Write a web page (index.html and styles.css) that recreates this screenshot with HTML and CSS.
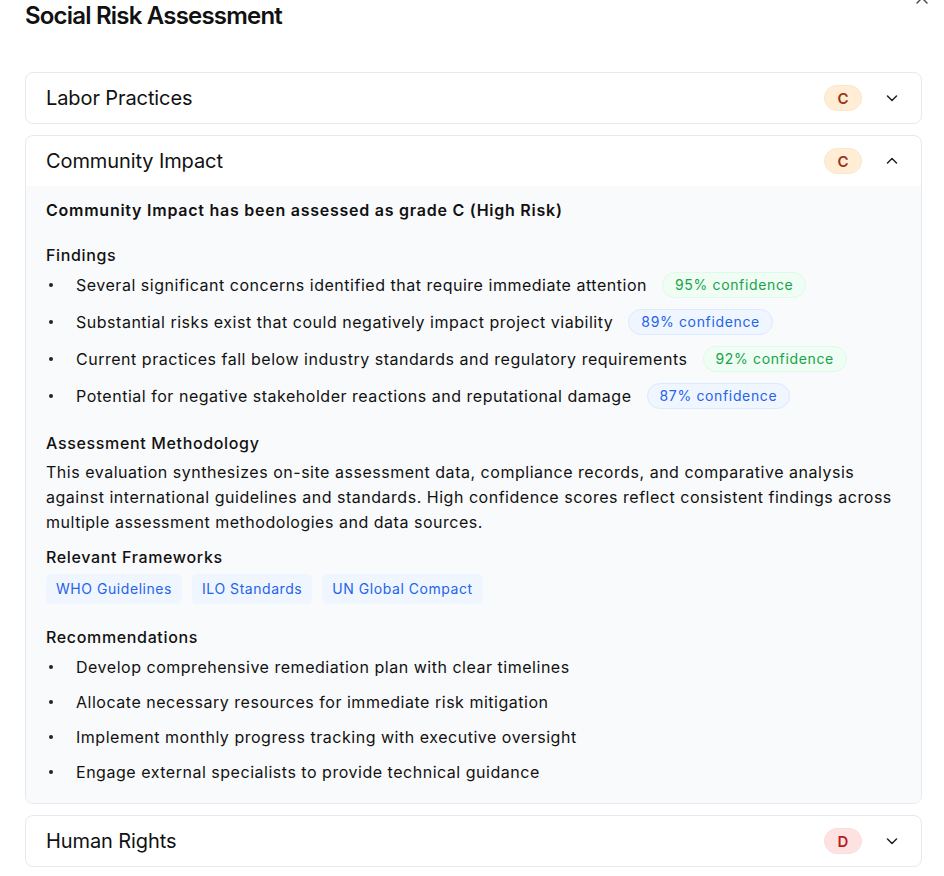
FILE: index.html
```html
<!DOCTYPE html>
<html lang="en">
<head>
<meta charset="utf-8">
<title>Social Risk Assessment</title>
<link rel="stylesheet" href="styles.css">
</head>
<body>
<div class="modal">
  <button class="close" aria-label="Close">
    <svg width="14" height="14" viewBox="0 0 14 14"><path d="M2 2L12 12M12 2L2 12" stroke="#444" stroke-width="1.4" stroke-linecap="round"/></svg>
  </button>
  <h1 class="title">Social Risk Assessment</h1>
  <div class="cards">
    <div class="card">
      <div class="card-head">
        <span class="card-title">Labor Practices</span>
        <span class="grade grade-c">C</span>
        <svg class="chev" width="16" height="16" viewBox="0 0 16 16"><path d="M3.5 6L8 10.5L12.5 6" fill="none" stroke="#222" stroke-width="1.5" stroke-linecap="round" stroke-linejoin="round"/></svg>
      </div>
    </div>
    <div class="card">
      <div class="card-head">
        <span class="card-title">Community Impact</span>
        <span class="grade grade-c">C</span>
        <svg class="chev" width="16" height="16" viewBox="0 0 16 16"><path d="M3.5 10L8 5.5L12.5 10" fill="none" stroke="#222" stroke-width="1.5" stroke-linecap="round" stroke-linejoin="round"/></svg>
      </div>
      <div class="card-body">
        <p class="summary">Community Impact has been assessed as grade C (High Risk)</p>
        <h3 class="sub">Findings</h3>
        <ul class="findings">
          <li><span class="dot"></span><span>Several significant concerns identified that require immediate attention</span><span class="conf green">95% confidence</span></li>
          <li><span class="dot"></span><span>Substantial risks exist that could negatively impact project viability</span><span class="conf blue">89% confidence</span></li>
          <li><span class="dot"></span><span>Current practices fall below industry standards and regulatory requirements</span><span class="conf green">92% confidence</span></li>
          <li><span class="dot"></span><span>Potential for negative stakeholder reactions and reputational damage</span><span class="conf blue">87% confidence</span></li>
        </ul>
        <h3 class="sub method">Assessment Methodology</h3>
        <p class="para">This evaluation synthesizes on-site assessment data, compliance records, and comparative analysis against international guidelines and standards. High confidence scores reflect consistent findings across multiple assessment methodologies and data sources.</p>
        <h3 class="sub frameworks">Relevant Frameworks</h3>
        <div class="tags">
          <span class="tag">WHO Guidelines</span>
          <span class="tag">ILO Standards</span>
          <span class="tag">UN Global Compact</span>
        </div>
        <h3 class="sub recs">Recommendations</h3>
        <ul class="recommend">
          <li><span class="dot"></span><span>Develop comprehensive remediation plan with clear timelines</span></li>
          <li><span class="dot"></span><span>Allocate necessary resources for immediate risk mitigation</span></li>
          <li><span class="dot"></span><span>Implement monthly progress tracking with executive oversight</span></li>
          <li><span class="dot"></span><span>Engage external specialists to provide technical guidance</span></li>
        </ul>
      </div>
    </div>
    <div class="card">
      <div class="card-head">
        <span class="card-title">Human Rights</span>
        <span class="grade grade-d">D</span>
        <svg class="chev" width="16" height="16" viewBox="0 0 16 16"><path d="M3.5 6L8 10.5L12.5 6" fill="none" stroke="#222" stroke-width="1.5" stroke-linecap="round" stroke-linejoin="round"/></svg>
      </div>
    </div>
  </div>
</div>
</body>
</html>
```

FILE: styles.css
```css
* { box-sizing: border-box; }
html, body { margin: 0; padding: 0; background: #fff; }
body {
  font-family: Inter, "Noto Sans", "Liberation Sans", sans-serif;
  color: #111;
  width: 944px;
  height: 876px;
  overflow: hidden;
}
.modal {
  position: relative;
  padding: 0 22px 0 25px;
}
.close {
  position: absolute;
  top: -9px;
  right: 15px;
  border: 0;
  background: transparent;
  padding: 0;
  width: 14px;
  height: 14px;
  display: flex;
}
.title {
  margin: 0;
  font-size: 24px;
  line-height: 32px;
  font-weight: 600;
  letter-spacing: -0.8px;
  color: #111;
}
.cards {
  margin-top: 40px;
  display: flex;
  flex-direction: column;
  gap: 11px;
}
.card {
  border: 1px solid #e8e9ec;
  border-radius: 8px;
  overflow: hidden;
  background: #fff;
}
.card-head {
  height: 50px;
  display: flex;
  align-items: center;
  padding: 0 21px 0 20px;
}
.card-title {
  flex: 1;
  font-size: 20px;
  line-height: 28px;
  font-weight: 400;
  letter-spacing: -0.1px;
  color: #111;
}
.grade {
  display: inline-flex;
  align-items: center;
  justify-content: center;
  width: 38px;
  height: 26px;
  border-radius: 13px;
  font-size: 15px;
  font-weight: 600;
}
.grade-c { background: #ffedd5; color: #9a3412; border: 1px solid #fde6c9; }
.grade-d { background: #fee2e2; color: #b91c1c; border: 1px solid #fddcdc; }
.chev { margin-left: 22px; display: block; }
.card-body {
  background: #f9fafb;
  padding: 12px 20px 19px 20px;
}
.summary {
  margin: 0;
  font-size: 16px;
  line-height: 24px;
  font-weight: 600;
  letter-spacing: 0.75px;
}
.sub {
  margin: 0;
  font-size: 16px;
  line-height: 24px;
  font-weight: 500;
  letter-spacing: 0.65px;
}
.summary + .sub { margin-top: 21px; }
ul { list-style: none; margin: 0; padding: 0; }
.findings { margin-top: 5px; display: flex; flex-direction: column; gap: 11px; }
.findings li, .recommend li {
  display: flex;
  align-items: center;
  font-size: 16px;
  line-height: 24px;
  letter-spacing: 0.52px;
}
.findings li { height: 26px; }
.recommend li { height: 24px; }
.dot {
  flex: none;
  width: 4px;
  height: 4px;
  border-radius: 50%;
  background: #222;
  margin: 0 23px 0 3px;
}
.conf {
  margin-left: 15px;
  height: 26px;
  display: inline-flex;
  align-items: center;
  padding: 0 12px;
  border-radius: 13px;
  font-size: 14px;
  letter-spacing: 0.65px;
}
.conf.green { background: #f0fdf4; color: #16a34a; border: 1px solid #dcfce7; }
.conf.blue { background: #eff6ff; color: #2563eb; border: 1px solid #dbeafe; }
.method { margin-top: 22px; }
.para {
  margin: 5px 0 0 0;
  font-size: 16px;
  line-height: 25px;
  letter-spacing: 0.52px;
}
.frameworks { margin-top: 10px; }
.tags { margin-top: 5px; display: flex; gap: 10px; }
.tag {
  background: #eff6ff;
  color: #2563eb;
  font-size: 14px;
  line-height: 20px;
  padding: 5px 10px;
  border-radius: 5px;
  letter-spacing: 0.55px;
}
.recs { margin-top: 21px; }
.recommend { margin-top: 6px; display: flex; flex-direction: column; gap: 11px; }
```
